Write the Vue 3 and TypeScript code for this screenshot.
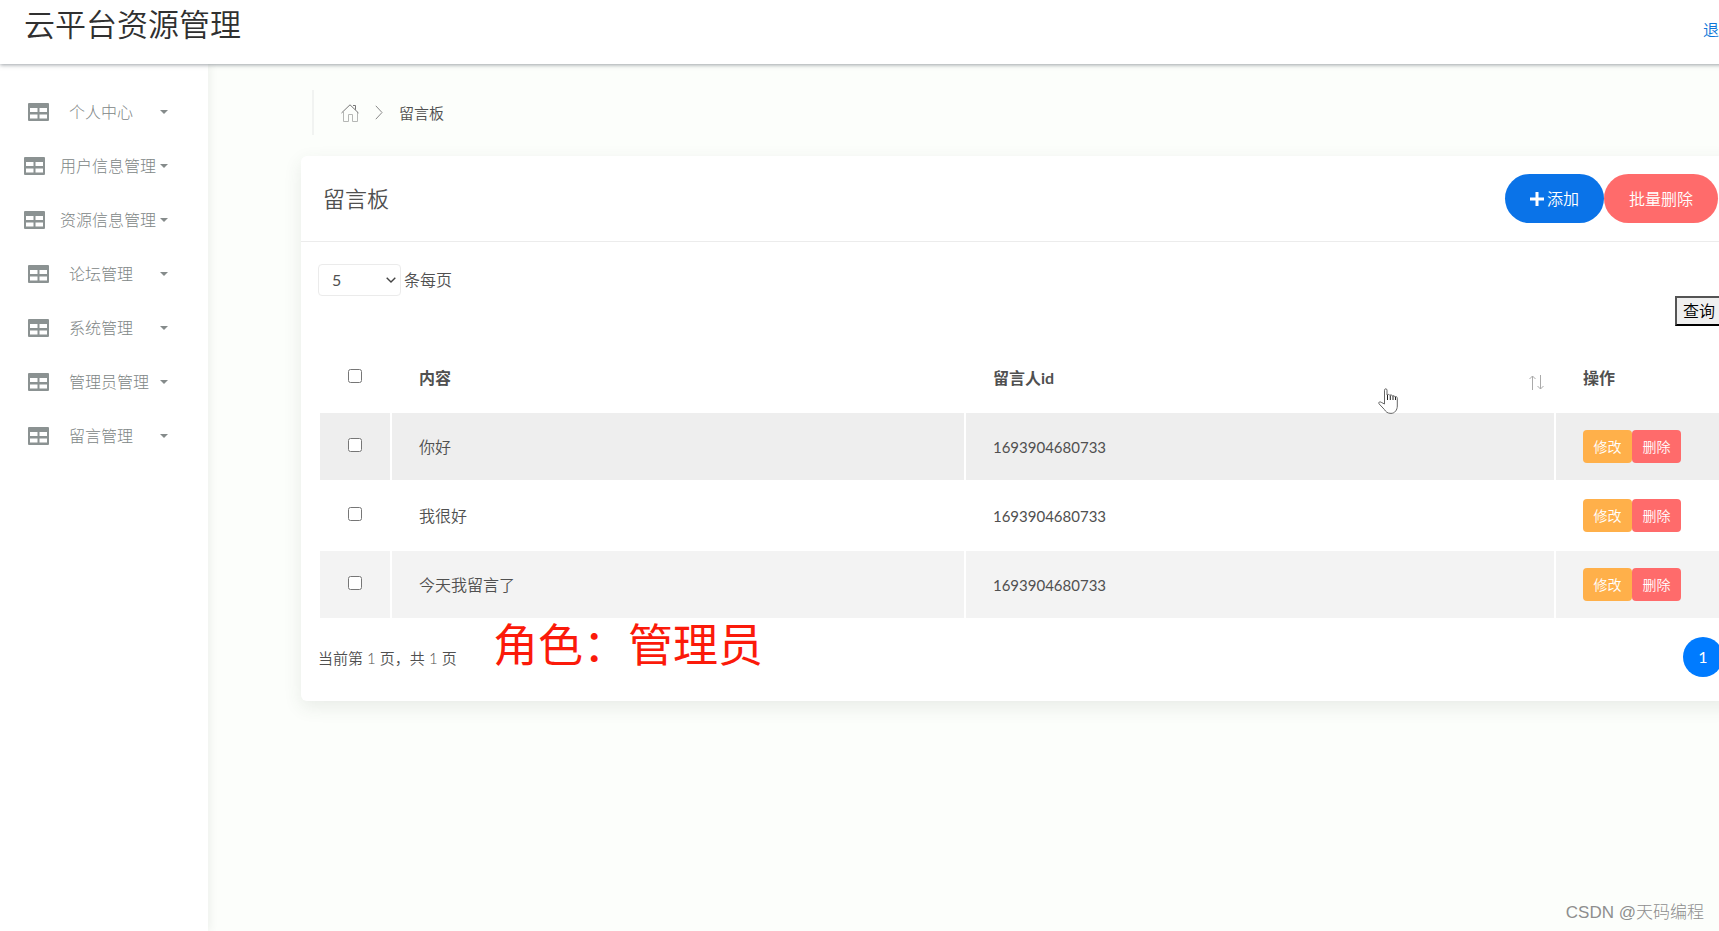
<script setup lang="ts">
import { ref } from 'vue'

interface MenuItem {
  label: string
  wide?: boolean
}

interface Message {
  id: number
  content: string
  userId: string
  checked: boolean
}

const menu: MenuItem[] = [
  { label: '个人中心' },
  { label: '用户信息管理', wide: true },
  { label: '资源信息管理', wide: true },
  { label: '论坛管理' },
  { label: '系统管理' },
  { label: '管理员管理' },
  { label: '留言管理' },
]

const messages = ref<Message[]>([
  { id: 1, content: '你好', userId: '1693904680733', checked: false },
  { id: 2, content: '我很好', userId: '1693904680733', checked: false },
  { id: 3, content: '今天我留言了', userId: '1693904680733', checked: false },
])

const pageSize = ref('5')

function toggleAll(event: Event) {
  const on = (event.target as HTMLInputElement).checked
  messages.value.forEach((m) => (m.checked = on))
}
</script>

<template>
  <div class="viewport">
    <div class="page">
      <header class="topbar">
        <h1>云平台资源管理</h1>
        <a href="#logout">退</a>
      </header>

      <div class="layout">
        <nav class="sidebar">
          <ul>
            <li v-for="item in menu" :key="item.label">
              <button type="button" class="menu-item" :class="{ wide: item.wide }">
                <svg class="table-icon" viewBox="0 0 21 18" aria-hidden="true">
                  <path
                    fill-rule="evenodd"
                    d="M1 0h19a1 1 0 0 1 1 1v16a1 1 0 0 1-1 1H1a1 1 0 0 1-1-1V1a1 1 0 0 1 1-1zM2 5v4h7.500V5zm9.500 0v4H19V5zM2 11.500v4h7.500v-4zm9.500 0v4H19v-4z"
                  />
                </svg>
                <span class="menu-label">{{ item.label }}</span>
                <span class="caret"></span>
              </button>
            </li>
          </ul>
        </nav>

        <main class="content">
          <nav class="breadcrumb" aria-label="breadcrumb">
            <a href="#home" aria-label="首页">
              <svg class="home-icon" viewBox="0 0 18 18" aria-hidden="true">
                <path d="M2.500 8v9.500h5V10.500h4v7h5V8" />
                <path d="M.5 9 9 .8 17.500 9M12 1.500h2.500v4.300" class="roof" />
              </svg>
            </a>
            <svg class="chevron" viewBox="0 0 8 15" aria-hidden="true">
              <path d="M.8.8 7 7.500.8 14.200" />
            </svg>
            <span>留言板</span>
          </nav>

          <section class="card">
            <div class="card-head">
              <h2>留言板</h2>
              <div class="card-actions">
                <button type="button" class="pill add">
                  <svg viewBox="0 0 14 14" aria-hidden="true"><path d="M7 0v14M0 7h14" /></svg>
                  <span>添加</span>
                </button>
                <button type="button" class="pill remove">批量删除</button>
              </div>
            </div>

            <div class="card-body">
              <label class="page-size">
                <span class="select-box">
                  <select v-model="pageSize">
                    <option>5</option>
                    <option>10</option>
                    <option>25</option>
                  </select>
                  <svg viewBox="0 0 10 6" aria-hidden="true"><path d="M.7.700 5 5 9.300.7" /></svg>
                </span>
                <span>条每页</span>
              </label>

              <div class="search">
                <button type="button">查询</button>
              </div>

              <table>
                <colgroup>
                  <col class="col-check" />
                  <col class="col-content" />
                  <col />
                  <col class="col-actions" />
                </colgroup>
                <thead>
                  <tr>
                    <th class="check"><input type="checkbox" aria-label="全选" @change="toggleAll" /></th>
                    <th>内容</th>
                    <th>
                      <div class="sortable">
                        <span>留言人id</span>
                        <svg class="sort-icon" viewBox="0 0 15 15" aria-hidden="true">
                          <path d="M3.500 15V1M.500 4l3-3 3 3M11.500 0v14M8.500 11l3 3 3-3" />
                        </svg>
                      </div>
                    </th>
                    <th>操作</th>
                  </tr>
                </thead>
                <tbody>
                  <tr v-for="m in messages" :key="m.id">
                    <td class="check">
                      <input v-model="m.checked" type="checkbox" :aria-label="m.content" />
                    </td>
                    <td>{{ m.content }}</td>
                    <td class="number">{{ m.userId }}</td>
                    <td>
                      <div class="row-actions">
                        <button type="button" class="edit">修改</button>
                        <button type="button" class="delete">删除</button>
                      </div>
                    </td>
                  </tr>
                </tbody>
              </table>

              <div class="card-foot">
                <span class="page-info">当前第 1 页，共 1 页</span>
                <button type="button" class="page-number">1</button>
              </div>
            </div>

            <p class="role-note">角色：管理员</p>
            <svg class="pointer" viewBox="0 0 20 26" aria-hidden="true">
              <path
                class="hand"
                d="M6.500 16V2.200C6.500.3 9 .3 9 2.200V7c1-.9 2.300-.7 2.800.3 1-.7 2.200-.4 2.600.6 1-.6 2.200-.2 2.400.8 1.200-.5 2.500.1 2.500 1.500V18c0 4-2.600 7.400-6.300 7.400-3.500 0-5.200-1.600-6.700-4L1 15.800c-.9-1.500.8-2.600 2.200-1.500z"
              />
              <path class="fingers" d="M9.500 12V7M12.300 12V7.500M15 12V8M17.500 12V9" />
            </svg>
          </section>
        </main>
      </div>
    </div>
    <div class="watermark">CSDN @天码编程</div>
  </div>
</template>

<style>
body {
  margin: 0;
}
</style>

<style scoped>
.viewport {
  position: relative;
  min-height: 100vh;
  overflow: hidden;
  background: #fcfefb;
  color: #505050;
  font: 350 16px/24px Lato, 'Noto Sans CJK SC', sans-serif;
}

.viewport *,
.viewport *::before {
  box-sizing: border-box;
}

button,
select {
  font: inherit;
  color: inherit;
}

button {
  padding: 0;
  border: 0;
  cursor: pointer;
}

a {
  text-decoration: none;
}

/* The page is a little wider than the window and is cut at its right edge. */
.page {
  display: flex;
  flex-direction: column;
  width: calc(100% + 20px);
  min-height: 100vh;
}

.topbar {
  position: relative;
  z-index: 2;
  display: flex;
  justify-content: space-between;
  align-items: flex-start;
  height: 64px;
  padding: 2px 20px 0 24px;
  background: #fff;
  box-shadow: 0 1px 4px rgba(60, 70, 80, 0.5);
}

h1 {
  margin: 0;
  color: #303030;
  font-size: 31px;
  font-weight: 350;
  line-height: 44px;
}

.topbar a {
  margin-top: 16px;
  color: #0b75d8;
}

.layout {
  display: flex;
  flex: 1;
}

.sidebar {
  flex: none;
  width: 208px;
  padding-top: 21px;
  background: #fff;
  box-shadow: 2px 0 8px rgba(60, 80, 60, 0.08);
}

ul {
  margin: 0;
  padding: 0;
  list-style: none;
}

.menu-item {
  display: flex;
  align-items: center;
  width: 100%;
  height: 54px;
  padding: 0 40px 0 28px;
  background: none;
  color: #808686;
  font-weight: 300;
}

.menu-item.wide {
  padding-left: 24px;
}

.table-icon {
  flex: none;
  width: 21px;
  height: 18px;
  margin-right: 20px;
  fill: #8b9292;
}

.menu-item.wide .table-icon {
  margin-right: 15px;
}

.menu-label {
  white-space: nowrap;
}

.caret {
  flex: none;
  margin-left: auto;
  border: 4px solid transparent;
  border-top-color: #858b8b;
  border-bottom: 0;
}

.content {
  flex: 1;
  min-width: 0;
  padding: 26px 0 40px 93px;
}

.breadcrumb {
  display: flex;
  align-items: center;
  height: 45px;
  margin: 0 0 21px 11px;
  padding-left: 27px;
  border-left: 2px solid #f1f3f1;
  font-size: 15px;
}

.breadcrumb a {
  display: flex;
}

.home-icon {
  width: 18px;
  height: 18px;
  fill: none;
  stroke: #b5b7b5;
}

.home-icon .roof {
  stroke: #777;
}

.chevron {
  width: 8px;
  height: 15px;
  margin: 0 16px;
  fill: none;
  stroke: #888;
}

.card {
  position: relative;
  border-radius: 6px;
  background: #fff;
  box-shadow: 0 6px 18px rgba(60, 80, 60, 0.1);
}

.card-head {
  display: flex;
  justify-content: space-between;
  align-items: center;
  height: 86px;
  padding: 0 21px 0 22px;
  border-bottom: 1px solid #ececec;
}

h2 {
  margin: 0;
  font-size: 22px;
  font-weight: 350;
}

.card-actions {
  display: flex;
}

.pill {
  display: flex;
  align-items: center;
  justify-content: center;
  gap: 3px;
  height: 49px;
  padding: 0 25px;
  border-radius: 25px;
  color: #fff;
}

.add {
  background: #0a73e8;
}

.add svg {
  width: 14px;
  height: 14px;
  stroke: #fff;
  stroke-width: 3;
}

.remove {
  background: #ff6b6b;
}

.card-body {
  padding: 22px 16px 24px 17px;
}

.page-size {
  display: flex;
  align-items: center;
  gap: 3px;
  width: max-content;
}

.select-box {
  position: relative;
  display: flex;
}

.select-box select {
  width: 83px;
  height: 32px;
  padding: 0 12px 0 13px;
  border: 1px solid #ebebeb;
  border-radius: 4px;
  background: #fff;
  font-weight: 400;
  appearance: none;
}

.select-box svg {
  position: absolute;
  top: 13px;
  right: 5px;
  width: 10px;
  height: 6px;
  fill: none;
  stroke: #444;
  stroke-width: 1.400;
  pointer-events: none;
}

.search {
  display: flex;
  justify-content: flex-end;
  margin-bottom: 16px;
}

.search button {
  height: 30px;
  padding: 0 6px;
  border: 2px outset #000;
  background: #efefef;
  color: #000;
}

table {
  width: 100%;
  table-layout: fixed;
  border-collapse: separate;
  border-spacing: 2px;
}

.col-check {
  width: 70px;
}

.col-content {
  width: 41%;
}

.col-actions {
  width: 165px;
}

th,
td {
  height: 67px;
  padding: 0 10px 0 27px;
  text-align: left;
  vertical-align: middle;
}

th {
  font-size: 16px;
  font-weight: 700;
}

.check {
  padding: 0 0 3px;
  text-align: center;
}

.check input {
  display: block;
  width: 14px;
  height: 14px;
  margin: 0 auto;
}

tbody tr:nth-child(odd) td {
  background: #f3f3f3;
}

tbody tr:first-child td {
  background: #eee;
}

.number {
  font-size: 15px;
  font-weight: 400;
}

.sortable {
  display: flex;
  align-items: center;
  justify-content: space-between;
}

.sort-icon {
  width: 15px;
  height: 15px;
  margin-top: 10px;
  fill: none;
  stroke: #aaa;
}

.row-actions {
  display: flex;
}

.row-actions button {
  width: 49px;
  height: 33px;
  border-radius: 4px;
  color: #fff;
  font-size: 14px;
}

.edit {
  background: #ffb04a;
}

.delete {
  background: #ff6b6b;
}

.card-foot {
  display: flex;
  align-items: center;
  justify-content: space-between;
  margin-top: 17px;
}

.page-info {
  padding-top: 2px;
  font-size: 15px;
}

.page-number {
  width: 40px;
  height: 40px;
  border-radius: 50%;
  background: #007bff;
  color: #fff;
  font-weight: 400;
}

.role-note {
  position: absolute;
  bottom: 24px;
  left: 192px;
  margin: 0;
  color: #fb1a0a;
  font-size: 45px;
  font-weight: 400;
  line-height: 64px;
}

.pointer {
  position: absolute;
  top: 232px;
  left: 1077px;
  width: 20px;
  height: 26px;
}

.hand {
  fill: #fff;
  stroke: #666;
}

.fingers {
  stroke: #222;
}

.watermark {
  position: absolute;
  right: 15px;
  bottom: 6px;
  color: #8e8e8e;
  font: 300 17px/24px 'Liberation Sans', 'Noto Sans CJK SC', sans-serif;
}
</style>
